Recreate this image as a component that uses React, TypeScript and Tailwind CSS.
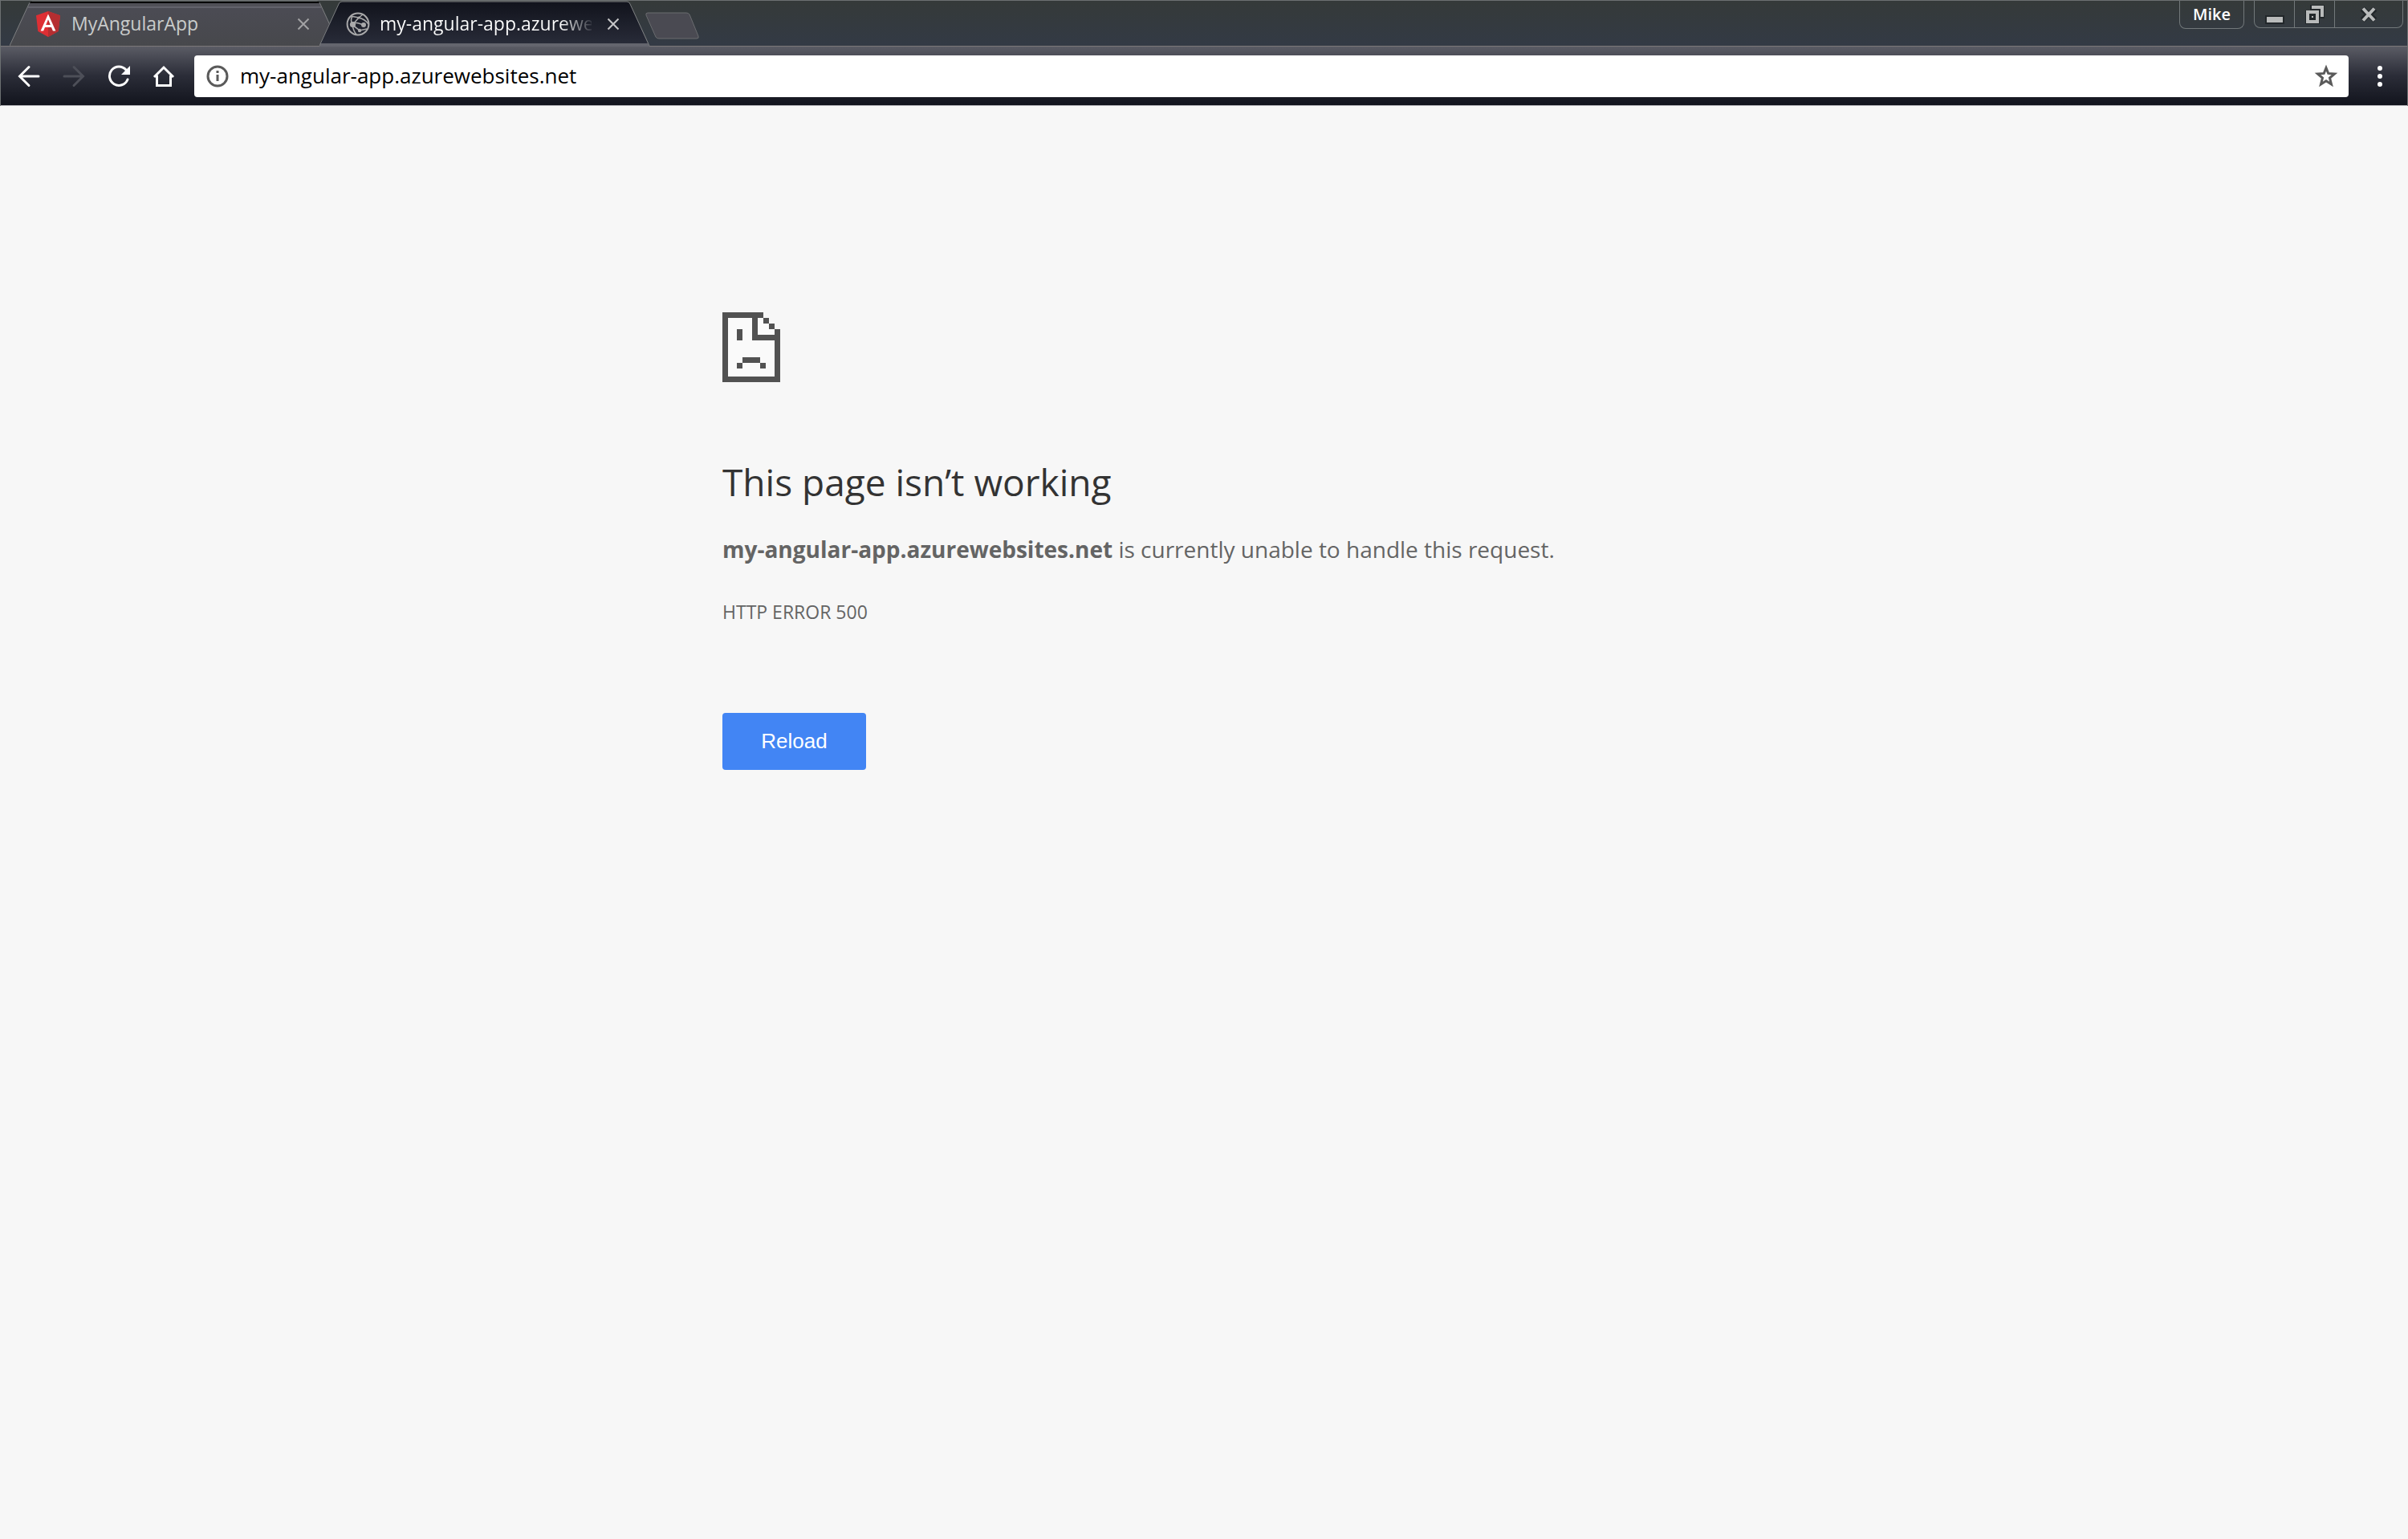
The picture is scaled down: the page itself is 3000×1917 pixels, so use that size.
import React from "react";

const uiFont = "font-['Open_Sans','Noto_Sans',sans-serif]";

function TabShape({ active }: { active?: boolean }) {
  return (
    <svg viewBox="0 0 412 57" className="absolute inset-0 -z-10 h-full w-full" preserveAspectRatio="none" aria-hidden="true">
      <defs>
        <linearGradient id="tab-active" x1="0" y1="0" x2="0" y2="1">
          <stop offset="0" stopColor="#11131c" />
          <stop offset="1" stopColor="#282b38" />
        </linearGradient>
        <linearGradient id="tab-idle" x1="0" y1="0" x2="0" y2="1">
          <stop offset="0" stopColor="#4c4c55" />
          <stop offset="1" stopColor="#47484c" />
        </linearGradient>
      </defs>
      {active ? (
        <>
          <path d="M0 56 L24 4 Q25 1 28 1 H383 Q386 1 387 4 L411 57 H0Z" fill="#64656e" />
          <path d="M1 53 L24 4 Q25 1 28 1 H383 Q386 1 387 4 L409 53Z" fill="url(#tab-active)" />
          <path d="M0 56 L24 4 Q25 1 28 1 H383 Q386 1 387 4 L411 56" fill="none" stroke="#7d7f80" />
        </>
      ) : (
        <>
          <path d="M0 56 L24 4 Q25 1 28 1 H383 Q386 1 387 4 L411 56Z" fill="url(#tab-idle)" />
          <path d="M24 5 H387" stroke="#505057" strokeWidth="4" />
          <path d="M23 8 H388" stroke="#62626b" strokeWidth="2" />
          <path d="M0 56 L24 4 Q25 1 28 1 H383 Q386 1 387 4 L411 56" fill="none" stroke="#7d7f80" />
          <path d="M26 1 H385 L386 3 H25Z" fill="#040405" />
        </>
      )}
    </svg>
  );
}

function CloseButton({ label, color }: { label: string; color: string }) {
  return (
    <button aria-label={label} className={`flex size-4 shrink-0 items-center justify-center ${color}`}>
      <svg viewBox="0 0 16 16" className="size-4" fill="none" stroke="currentColor" strokeWidth="2">
        <path d="M1.5 1.5 L14.5 14.5 M14.5 1.5 L1.5 14.5" />
      </svg>
    </button>
  );
}

function AngularLogo() {
  return (
    <svg viewBox="0 0 30 32" className="h-8 w-[30px] shrink-0" aria-hidden="true">
      <path d="M15 0 L0 5.3 L2.3 25 L15 32 L27.7 25 L30 5.3Z" fill="#dd2f34" />
      <path d="M15 0 V32 L27.7 25 L30 5.3Z" fill="#b52e31" />
      <path fillRule="evenodd" d="M15 3.6 L5.6 24.6 H9.1 L11 19.9 H19 L20.9 24.6 H24.4Z M15 10.2 L17.8 17 H12.2Z" fill="#fff" />
    </svg>
  );
}

function GlobeIcon() {
  return (
    <svg viewBox="0 0 30 30" className="size-[30px] shrink-0" fill="none" stroke="#a9a9aa" strokeWidth="2" aria-hidden="true">
      <circle cx="15" cy="15" r="13.4" />
      <path d="M8 16 L16 7 L6 5 M16 7 L21 3 M8 13 Q15 13 22 16 M16 7 Q24 9 28 15 M8 16 L17 23 L26 21 M8 16 Q5 10 8 5" strokeWidth="1.6" />
      <path d="M8 16 Q9 23 13 28" strokeWidth="1.6" />
      <circle cx="8.500" cy="15.500" r="3.600" fill="#a9a9aa" stroke="none" />
      <circle cx="22" cy="16" r="3" fill="#a9a9aa" stroke="none" />
      <circle cx="16" cy="7" r="1.600" fill="#a9a9aa" stroke="none" />
      <circle cx="17" cy="23" r="2.200" fill="#a9a9aa" stroke="none" />
    </svg>
  );
}

function TabStrip() {
  return (
    <div className="flex h-14 items-start bg-linear-to-b from-[#353a39] to-[#333a45] pl-[11px]">
      <div className="relative isolate flex h-[57px] w-[412px] items-center pr-[38px] pl-[33px]">
        <TabShape />
        <AngularLogo />
        <button className="ml-[14px] flex-1 text-left text-[23px] text-[#c9cccb]">MyAngularApp</button>
        <CloseButton label="Close MyAngularApp" color="text-[#a2a2a4]" />
      </div>
      <div className="relative isolate z-10 -ml-[26px] flex h-[57px] w-[412px] items-center pr-[38px] pl-[33px]">
        <TabShape active />
        <GlobeIcon />
        <button className="mr-[19px] ml-3 flex-1 overflow-hidden bg-linear-to-r from-white from-85% to-white/10 bg-clip-text text-left text-[23px] whitespace-nowrap text-transparent">
          my-angular-app.azurewebsites.net
        </button>
        <CloseButton label="Close my-angular-app" color="text-[#c6c6c8]" />
      </div>
      <button aria-label="New tab" className="mt-[14px] -ml-[6px]">
        <svg viewBox="0 0 68 34" className="h-[34px] w-[68px]" aria-hidden="true">
          <path d="M3 1 H51 Q54 1 55 3 L66 30 Q67 33 64 33 H17 Q14 33 13 31 L1 4 Q0 1 3 1Z" fill="#4a4a52" stroke="#6a6c6f" />
        </svg>
      </button>
      <div className="ml-auto flex items-start pr-[5px] text-[#b9bbbb]">
        <button className="mr-3 h-[35px] w-[81px] rounded-b-lg border border-t-0 border-[#72787a] text-[20px] leading-none font-semibold text-white">
          Mike
        </button>
        <div className="flex h-[34px] rounded-b-lg border border-t-0 border-[#72787a]">
          <button aria-label="Minimize" className="flex w-[49px] items-center justify-center">
            <svg viewBox="0 0 24 30" className="h-[30px] w-6">
              <path d="M1 17 H23 V26 H1Z" fill="currentColor" stroke="#22272a" strokeWidth="2" />
            </svg>
          </button>
          <button aria-label="Restore" className="flex w-[51px] items-center justify-center border-x border-[#72787a]">
            <svg viewBox="0 0 26 26" className="size-[26px]" fill="none">
              <path d="M7 1 H25 V18 H19 V25 H1 V8 H7Z" fill="#22272a" />
              <path d="M9 4 H22 V16" stroke="currentColor" strokeWidth="4" />
              <path d="M4 10 H16 V22 H4Z" stroke="currentColor" strokeWidth="4" />
              <path d="M8 14h4v4h-4z" fill="currentColor" stroke="#22272a" strokeWidth="2" />
            </svg>
          </button>
          <button aria-label="Close window" className="flex w-[84px] items-center justify-center">
            <svg viewBox="0 0 22 22" className="size-[22px]" fill="none">
              <path d="M3 4 L19 18 M19 4 L3 18" stroke="#22272a" strokeWidth="7" />
              <path d="M4 3.500 L18 18.500 M18 3.500 L4 18.500" stroke="currentColor" strokeWidth="4" />
            </svg>
          </button>
        </div>
      </div>
    </div>
  );
}

function Toolbar() {
  return (
    <div className="flex h-[75px] items-center border-t border-b border-t-[#7b7778] border-b-[#b9b8bd] bg-linear-to-b from-[#5b5c65] via-[#2b2d38] to-[#12141d] pl-[21px] text-white">
      <div className="flex items-center gap-7">
        <button aria-label="Back">
          <svg viewBox="0 0 28 28" className="size-7" fill="none" stroke="currentColor" strokeWidth="3" strokeLinecap="round">
            <path d="M26 14 H3 M14 2.500 L2.500 14 L14 25.500" />
          </svg>
        </button>
        <button aria-label="Forward" className="text-[#4d4f58]">
          <svg viewBox="0 0 28 28" className="size-7" fill="none" stroke="currentColor" strokeWidth="3" strokeLinecap="round">
            <path d="M2 14 H25 M14 2.500 L25.500 14 L14 25.500" />
          </svg>
        </button>
        <button aria-label="Reload page">
          <svg viewBox="0 0 28 28" className="size-7" fill="none" stroke="currentColor" strokeWidth="3" strokeLinecap="round">
            <path d="M23 6 A11.700 11.700 0 1 0 25 18" />
            <path d="M28 1 V12 H17Z" fill="currentColor" stroke="none" />
          </svg>
        </button>
        <button aria-label="Home">
          <svg viewBox="0 0 28 28" className="size-7" fill="none" stroke="currentColor" strokeWidth="3">
            <path d="M2 15 L14 3 L26 15 M5.500 13 V25.500 H22.500 V13" />
          </svg>
        </button>
      </div>
      <form className="ml-6 flex h-[52px] flex-1 items-center rounded-[4px] bg-white pr-[13px] pl-[15px] text-[#5a5a5a]" onSubmit={(e) => e.preventDefault()}>
        <button type="button" aria-label="View site information">
          <svg viewBox="0 0 28 28" className="size-7" fill="none" stroke="currentColor" strokeWidth="3">
            <circle cx="14" cy="14" r="12" />
            <path d="M14 12 V20 M14 7 V10" />
          </svg>
        </button>
        <input aria-label="Address" defaultValue="my-angular-app.azurewebsites.net" className="ml-[14px] min-w-0 flex-1 text-[26px] text-black outline-none" />
        <button type="button" aria-label="Bookmark this page">
          <svg viewBox="0 0 30 30" className="size-[30px]" fill="none" stroke="currentColor" strokeWidth="3">
            <path d="M15 4.500 L17.700 11.400 L25.500 12 L19.500 17 L21.500 25 L15 20.800 L8.500 25 L10.500 17 L4.500 12 L12.300 11.400Z" />
          </svg>
        </button>
      </form>
      <button aria-label="Browser menu" className="flex w-[73px] flex-col items-center gap-1 pl-1">
        <span className="size-[6px] rounded-full bg-white" />
        <span className="size-[6px] rounded-full bg-white" />
        <span className="size-[6px] rounded-full bg-white" />
      </button>
    </div>
  );
}

function SadPageIcon() {
  return (
    <svg viewBox="0 0 72 87" className="h-[87px] w-[72px]" shapeRendering="crispEdges" aria-hidden="true">
      <path fill="#fafafa" d="M5 5 H42 V32 H67 V82 H5Z M44 7 H54 L65 18 V28 H44Z" />
      <path fill="#525252" fillRule="evenodd" d="M0 0 H51 V7 H44 V28 H65 V21 H72 V87 H0Z M7 7 H37 V35 H65 V80 H7Z" />
      <path fill="#525252" d="M51 7h7v7h-7z M58 14h7v7h-7z M18 21h7v14h-7z M25 56h22v7h-22z M18 63h7v7h-7z M47 63h7v7h-7z" />
    </svg>
  );
}

export default function App() {
  return (
    <div className={`flex min-h-screen flex-col bg-[#f7f7f7] ${uiFont}`}>
      <header className="border-x border-t border-[#6c7071]">
        <TabStrip />
        <Toolbar />
      </header>
      <main className="mx-auto w-full max-w-[1200px] pt-[257px] text-[#646464]">
        <SadPageIcon />
        <h1 className="mt-[90px] text-[46px] leading-[68px] text-[#333]">This page isn’t working</h1>
        <p className="mt-7 text-[28px] leading-[44px]">
          <strong className="font-bold">my-angular-app.azurewebsites.net</strong> is currently unable to handle this request.
        </p>
        <p className="mt-10 text-[23px] leading-8">HTTP ERROR 500</p>
        <button className="mt-[110px] h-[71px] w-[179px] rounded-[4px] bg-[#4285f4] font-['Liberation_Sans',sans-serif] text-[26px] text-white">Reload</button>
      </main>
    </div>
  );
}
